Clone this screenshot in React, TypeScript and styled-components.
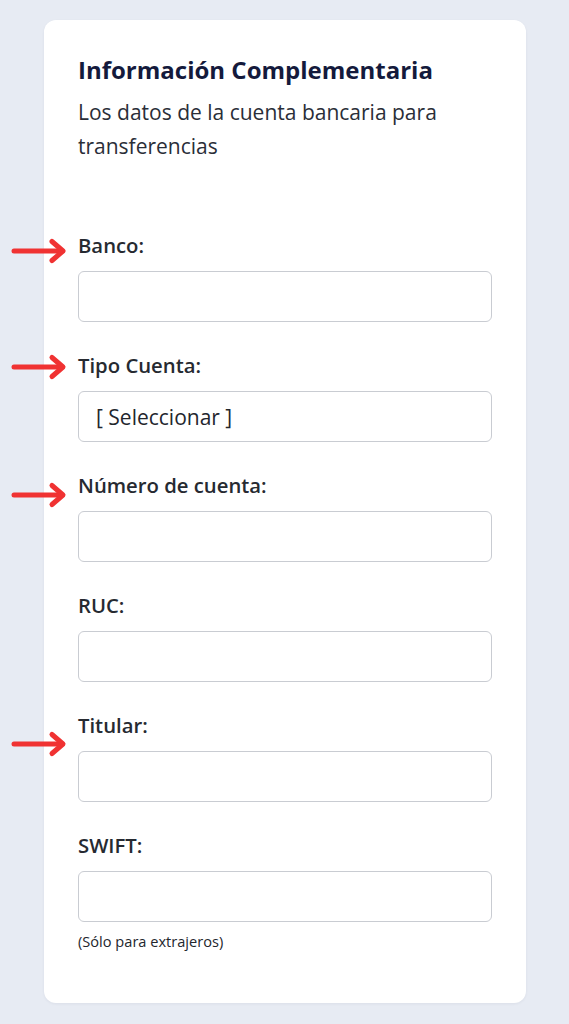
import React from "react";
import styled, { createGlobalStyle } from "styled-components";

const Global = createGlobalStyle`
  html, body { margin: 0; padding: 0; background: #e7ebf3; }
  body { font-family: "Open Sans", "Noto Sans", sans-serif; }
  * { box-sizing: border-box; }
`;

const Page = styled.div`
  min-height: 1024px;
  padding: 20px 43px 21px 44px;
`;

const Card = styled.section`
  background: #ffffff;
  border-radius: 12px;
  box-shadow: 0 1px 3px rgba(30, 40, 70, 0.06);
  padding: 35px 34px 53px 34px;
`;

const Title = styled.h2`
  margin: 0;
  font-size: 24px;
  line-height: 30px;
  font-weight: 700;
  color: #141a3c;
`;

const Subtitle = styled.p`
  margin: 10px 0 0;
  font-size: 21px;
  line-height: 34px;
  font-weight: 400;
  color: #2a2e38;
`;

const Fields = styled.div`
  margin-top: 69px;
  display: flex;
  flex-direction: column;
  gap: 30px;
`;

const Field = styled.div`
  position: relative;
  display: flex;
  flex-direction: column;
  gap: 13px;
`;

const Label = styled.label`
  font-size: 20.3px;
  line-height: 26px;
  font-weight: 600;
  color: #262a31;
`;

const Input = styled.input`
  width: 100%;
  height: 51px;
  border: 1.5px solid #c9ccd2;
  border-radius: 6px;
  background: #fff;
  font: inherit;
  font-size: 21px;
  padding: 0 18px;
  outline: none;
`;

const Select = styled.select`
  width: 100%;
  height: 51px;
  border: 1.5px solid #c9ccd2;
  border-radius: 6px;
  background: #fff;
  font-family: inherit;
  font-size: 21px;
  color: #23262d;
  padding: 0 17px;
  appearance: none;
  -webkit-appearance: none;
  outline: none;
`;

const Note = styled.div`
  margin-top: -20px;
  font-size: 14.6px;
  line-height: 18px;
  color: #23262d;
`;

const ArrowMark = styled.svg<{ $top: number }>`
  position: absolute;
  left: -66px;
  top: ${(p) => p.$top}px;
  width: 56px;
  height: 24px;
  overflow: visible;
`;

const Arrow = ({ top }: { top: number }) => (
  <ArrowMark $top={top} viewBox="0 0 56 24">
    <g fill="none" stroke="#f03232" strokeWidth="5" strokeLinecap="round" strokeLinejoin="round">
      <line x1="2" y1="12" x2="50" y2="12" />
      <polyline points="40,2.5 51,12 40,21.5" />
    </g>
  </ArrowMark>
);

export default function App() {
  return (
    <>
      <Global />
      <Page>
        <Card>
          <Title>Información Complementaria</Title>
          <Subtitle>
            Los datos de la cuenta bancaria para
            <br />
            transferencias
          </Subtitle>
          <Fields>
            <Field>
              <Arrow top={7} />
              <Label>Banco:</Label>
              <Input type="text" />
            </Field>
            <Field>
              <Arrow top={3} />
              <Label>Tipo Cuenta:</Label>
              <Select defaultValue="">
                <option value="">[ Seleccionar ]</option>
              </Select>
            </Field>
            <Field>
              <Arrow top={11} />
              <Label>Número de cuenta:</Label>
              <Input type="text" />
            </Field>
            <Field>
              <Label>RUC:</Label>
              <Input type="text" />
            </Field>
            <Field>
              <Arrow top={20} />
              <Label>Titular:</Label>
              <Input type="text" />
            </Field>
            <Field>
              <Label>SWIFT:</Label>
              <Input type="text" />
            </Field>
            <Note>(Sólo para extrajeros)</Note>
          </Fields>
        </Card>
      </Page>
    </>
  );
}
